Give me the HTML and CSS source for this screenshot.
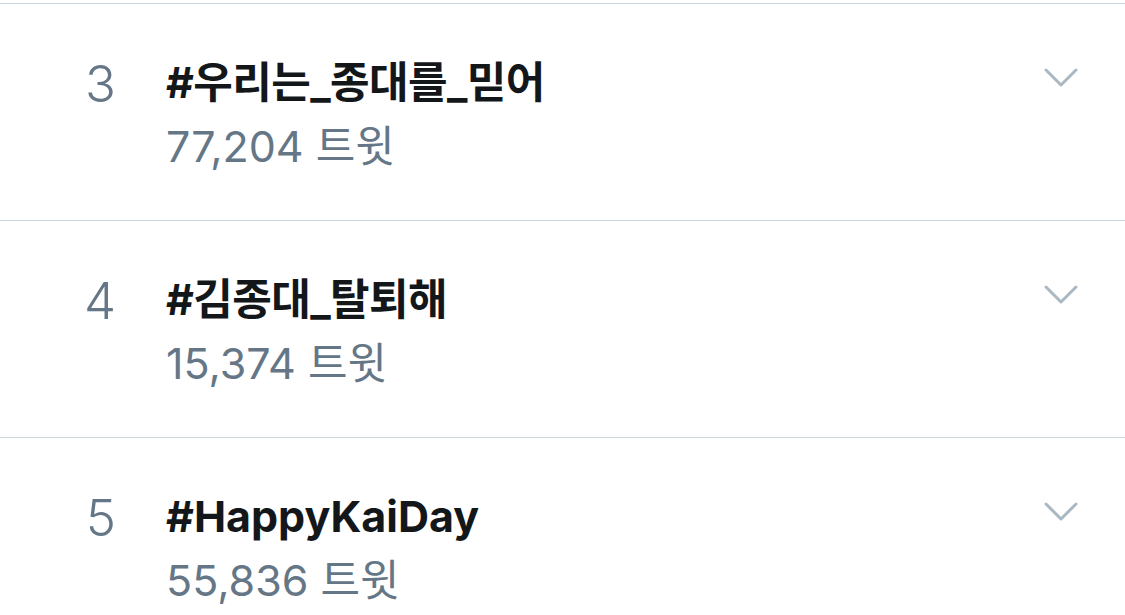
FILE: index.html
```html
<!DOCTYPE html>
<html lang="ko">
<head>
<meta charset="utf-8">
<link rel="stylesheet" href="styles.css">
</head>
<body>
<div class="list">
  <div class="row">
    <div class="rank">3</div>
    <div class="body">
      <div class="title ko">#우리는_종대를_믿어</div>
      <div class="count">77,204 트윗</div>
    </div>
    <svg class="chev" width="34" height="20" viewBox="0 0 34 20"><path d="M2 2 L17 17 L32 2" fill="none" stroke="#aab8c2" stroke-width="3" stroke-linecap="round" stroke-linejoin="round"/></svg>
  </div>
  <div class="row">
    <div class="rank">4</div>
    <div class="body">
      <div class="title ko">#김종대_탈퇴해</div>
      <div class="count">15,374 트윗</div>
    </div>
    <svg class="chev" width="34" height="20" viewBox="0 0 34 20"><path d="M2 2 L17 17 L32 2" fill="none" stroke="#aab8c2" stroke-width="3" stroke-linecap="round" stroke-linejoin="round"/></svg>
  </div>
  <div class="row">
    <div class="rank">5</div>
    <div class="body">
      <div class="title">#HappyKaiDay</div>
      <div class="count">55,836 트윗</div>
    </div>
    <svg class="chev" width="34" height="20" viewBox="0 0 34 20"><path d="M2 2 L17 17 L32 2" fill="none" stroke="#aab8c2" stroke-width="3" stroke-linecap="round" stroke-linejoin="round"/></svg>
  </div>
</div>
</body>
</html>
```

FILE: styles.css
```css
html, body {
  margin: 0;
  padding: 0;
  background: #ffffff;
  overflow: hidden;
}
body {
  font-family: "Inter", "Noto Sans CJK KR", sans-serif;
}
.list {
  margin-top: 3px;
}
.row {
  display: flex;
  align-items: flex-start;
  height: 216px;
  border-top: 1px solid #ccd6dd;
  box-sizing: content-box;
}
.rank {
  margin-top: 48px;
  text-align: right;
  padding-right: 50px;
  box-sizing: border-box;
  width: 166px;
  font-size: 51px;
  line-height: 64px;
  color: #657786;
  font-weight: 300;
}
.body {
  flex: 1;
  padding-top: 51px;
}
.title {
  font-size: 43px;
  line-height: 54px;
  font-weight: 700;
  color: #14171a;
}
.title.ko {
  letter-spacing: -0.6px;
}
.count {
  margin-top: 10px;
  font-size: 43px;
  line-height: 54px;
  color: #657786;
}
.chev {
  margin-top: 64px;
  margin-right: 47px;
}
```
